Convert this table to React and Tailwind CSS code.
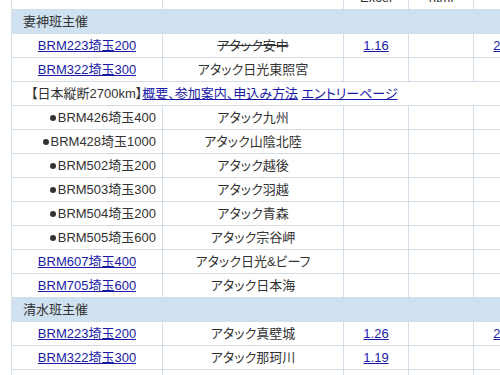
import React from "react";

const F = "font-['Liberation_Sans','Noto_Sans_CJK_JP',sans-serif]";
const td = "border border-[#d3dde8] h-[24px] p-0 leading-[23px] whitespace-nowrap";
const link = "text-[#1a1aa6] underline";

function Row({ name, bullet = false, title, strike = false, excel, x5 }) {
  return (
    <tr>
      <td className={`${td} ${bullet ? "text-right pr-[6px]" : "text-center"}`}>
        {bullet ? (
          <span>
            <span className="inline-block w-[6px] h-[6px] rounded-full bg-[#333] mr-[2px] align-[1px]"></span>
            {name}
          </span>
        ) : (
          <a className={link} href="#">{name}</a>
        )}
      </td>
      <td className={`${td} text-center`}>
        <span className={strike ? "line-through" : ""}>{title}</span>
      </td>
      <td className={`${td} text-center`}>{excel && <a className={link} href="#">{excel}</a>}</td>
      <td className={`${td} text-center`}></td>
      <td className={`${td} text-center`}>{x5 && <a className={link} href="#">{x5}</a>}</td>
    </tr>
  );
}

function Section({ label }) {
  return (
    <tr>
      <td colSpan={5} className={`${td} bg-[#cfe0f0] text-left`}>
        <div className="pl-[11px]">{label}</div>
      </td>
    </tr>
  );
}

export default function App() {
  return (
    <div className={`w-[500px] h-[375px] overflow-hidden bg-white ${F} text-[13px] text-[#333] [font-feature-settings:'palt']`}>
      <div className="pl-[11px] -mt-[15px]">
        <table className="border-collapse table-fixed w-[527px]">
          <colgroup>
            <col className="w-[151px]" />
            <col className="w-[181px]" />
            <col className="w-[65px]" />
            <col className="w-[65px]" />
            <col className="w-[65px]" />
          </colgroup>
          <tbody>
            <tr>
              <td className={`${td} text-center`}></td>
              <td className={`${td} text-center`}></td>
              <td className={`${td} text-center`}>Excel</td>
              <td className={`${td} text-center`}>html</td>
              <td className={`${td} text-center`}></td>
            </tr>
            <Section label="妻神班主催" />
            <Row name="BRM223埼玉200" title="アタック安中" strike excel="1.16" x5="2.00" />
            <Row name="BRM322埼玉300" title="アタック日光東照宮" />
            <tr>
              <td colSpan={5} className={`${td} text-left`}>
                <div className="pl-[19px]">
                  【日本縦断2700km】<a className={link} href="#">概要、参加案内、申込み方法</a>{" "}
                  <a className={link} href="#">エントリーページ</a>
                </div>
              </td>
            </tr>
            <Row bullet name="BRM426埼玉400" title="アタック九州" />
            <Row bullet name="BRM428埼玉1000" title="アタック山陰北陸" />
            <Row bullet name="BRM502埼玉200" title="アタック越後" />
            <Row bullet name="BRM503埼玉300" title="アタック羽越" />
            <Row bullet name="BRM504埼玉200" title="アタック青森" />
            <Row bullet name="BRM505埼玉600" title="アタック宗谷岬" />
            <Row name="BRM607埼玉400" title="アタック日光&ビーフ" />
            <Row name="BRM705埼玉600" title="アタック日本海" />
            <Section label="清水班主催" />
            <Row name="BRM223埼玉200" title="アタック真壁城" excel="1.26" x5="2.00" />
            <Row name="BRM322埼玉300" title="アタック那珂川" excel="1.19" />
            <Row name="BRM420埼玉400" title="アタック石岡" excel="1.18" />
          </tbody>
        </table>
      </div>
    </div>
  );
}
